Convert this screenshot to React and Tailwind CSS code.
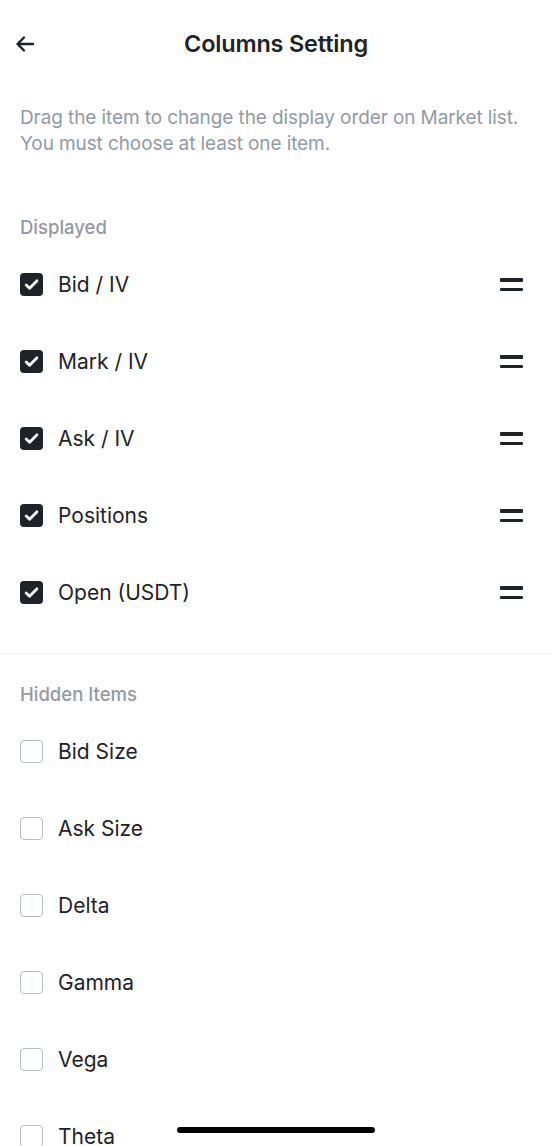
import React from "react";

const displayed = ["Bid / IV", "Mark / IV", "Ask / IV", "Positions", "Open (USDT)"];
const hidden = ["Bid Size", "Ask Size", "Delta", "Gamma", "Vega", "Theta"];

function Checked() {
  return (
    <div className="w-[23px] h-[23px] rounded-[4px] bg-[#1e2329] flex items-center justify-center shrink-0">
      <svg width="17" height="17" viewBox="0 0 16 16" fill="none">
        <path d="M3 8.4l3.2 3.1L13 4.6" stroke="white" strokeWidth="2.7" strokeLinecap="round" strokeLinejoin="round" />
      </svg>
    </div>
  );
}

function Unchecked() {
  return <div className="w-[23px] h-[23px] rounded-[4px] border-[1.5px] border-[#b7bdc6] bg-white shrink-0" />;
}

function DragIcon() {
  return (
    <div className="flex flex-col gap-[6px] w-[23px]">
      <div className="h-[3.5px] bg-[#1e2329] rounded-[1px]" />
      <div className="h-[3.5px] bg-[#1e2329] rounded-[1px]" />
    </div>
  );
}

function Row({ label, checked }) {
  return (
    <div className="h-[77px] flex items-center pl-5 pr-[29px]">
      {checked ? <Checked /> : <Unchecked />}
      <span className="ml-[15px] text-[21px] text-[#1e2329] flex-1">{label}</span>
      {checked && <DragIcon />}
    </div>
  );
}

export default function App() {
  return (
    <div
      className="relative w-[552px] h-[1146px] bg-white overflow-hidden"
      style={{ fontFamily: "Inter, 'Noto Sans', sans-serif" }}
    >
      <div className="h-[88px] flex items-center relative">
        <div className="absolute left-[13px] top-1/2 -translate-y-1/2">
          <svg width="24" height="24" viewBox="0 0 24 24" fill="none">
            <path d="M20 12H5M11 5.5L4.5 12l6.5 6.5" stroke="#1e2329" strokeWidth="2.4" strokeLinecap="round" strokeLinejoin="round" />
          </svg>
        </div>
        <div className="flex-1 text-center text-[23.5px] font-semibold text-[#1e2329] tracking-[-0.2px]">Columns Setting</div>
      </div>
      <div className="mt-[17px] px-5 text-[19px] leading-[26px] text-[#929aa5] tracking-[-0.1px]">
        Drag the item to change the display order on Market list.
        <br />
        You must choose at least one item.
      </div>
      <div className="mt-[60px] px-5 h-[22px] flex items-center text-[18.5px] font-medium text-[#929aa5]">Displayed</div>
      <div className="mt-[7px]">
        {displayed.map((l) => (
          <Row key={l} label={l} checked />
        ))}
      </div>
      <div className="mt-[22px] h-px bg-[#f2f3f5]" />
      <div className="mt-[30px] px-5 h-[22px] flex items-center text-[18.5px] font-medium text-[#929aa5]">Hidden Items</div>
      <div className="mt-[7px]">
        {hidden.map((l) => (
          <Row key={l} label={l} />
        ))}
      </div>
      <div className="absolute left-1/2 -translate-x-1/2 bottom-[13px] w-[198px] h-[6px] rounded-full bg-black" />
    </div>
  );
}
